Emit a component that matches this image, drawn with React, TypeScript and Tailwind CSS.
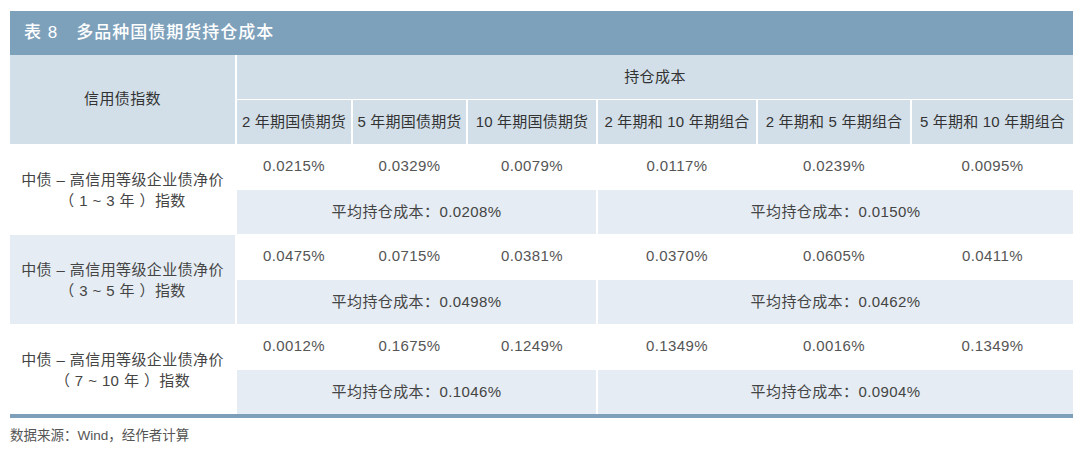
import React from "react";

const font = { fontFamily: '"Liberation Sans","Noto Sans CJK SC",sans-serif' };

const groups = [
  {
    name: "（ 1 ~ 3 年 ）指数",
    values: ["0.0215%", "0.0329%", "0.0079%", "0.0117%", "0.0239%", "0.0095%"],
    avg: ["0.0208%", "0.0150%"],
    light: false,
  },
  {
    name: "（ 3 ~ 5 年 ）指数",
    values: ["0.0475%", "0.0715%", "0.0381%", "0.0370%", "0.0605%", "0.0411%"],
    avg: ["0.0498%", "0.0462%"],
    light: true,
  },
  {
    name: "（ 7 ~ 10 年 ）指数",
    values: ["0.0012%", "0.1675%", "0.1249%", "0.1349%", "0.0016%", "0.1349%"],
    avg: ["0.1046%", "0.0904%"],
    light: false,
  },
];

const heads = [
  "2 年期国债期货",
  "5 年期国债期货",
  "10 年期国债期货",
  "2 年期和 10 年期组合",
  "2 年期和 5 年期组合",
  "5 年期和 10 年期组合",
];

export default function App() {
  return (
    <div className="w-[1080px] h-[450px] bg-white pt-[11px] px-[10px]" style={font}>
      <div className="w-[1063px]">
        <div className="h-[44px] bg-[#7ea1bb] flex items-center pl-[14px] text-white text-[17px] font-medium tracking-[1px]">
          <span>表 8</span>
          <span className="ml-[18px]">多品种国债期货持仓成本</span>
        </div>
        <div className="grid grid-cols-[225px_114px_113px_128px_158px_152px_161px] grid-rows-[44px_44px_44px_44px_44px_44px_44px_44px] gap-x-[2px] gap-y-[1px] bg-white tracking-[0.4px]">
          <div className="row-span-2 bg-[#d2dfe9] flex items-center justify-center text-[15px] text-[#333]">
            信用债指数
          </div>
          <div className="col-span-6 bg-[#d2dfe9] flex items-center justify-center text-[15px] text-[#333]">
            持仓成本
          </div>
          {heads.map((h) => (
            <div
              key={h}
              className="bg-[#d2dfe9] flex items-center justify-center text-[15px] text-[#333] whitespace-nowrap tracking-[0.2px]"
            >
              {h}
            </div>
          ))}
          {groups.map((g, gi) => (
            <React.Fragment key={gi}>
              <div
                className={`row-span-2 flex flex-col items-center justify-center text-[15px] leading-[21px] text-[#444] whitespace-nowrap ${
                  g.light ? "bg-[#e5ecf3]" : "bg-white"
                }`}
              >
                <span>中债 – 高信用等级企业债净价</span>
                <span>{g.name}</span>
              </div>
              {g.values.map((v, i) => (
                <div
                  key={i}
                  className="bg-white flex items-center justify-center pb-[2px] text-[15px] text-[#555]"
                >
                  {v}
                </div>
              ))}
              <div className="col-span-3 bg-[#e5ecf3] flex items-center justify-center text-[15px] text-[#444]">
                平均持仓成本：{g.avg[0]}
              </div>
              <div className="col-span-3 bg-[#e5ecf3] flex items-center justify-center text-[15px] text-[#444]">
                平均持仓成本：{g.avg[1]}
              </div>
            </React.Fragment>
          ))}
        </div>
        <div className="h-[4px] bg-[#7d9fba]" />
        <div className="mt-[8px] text-[13.5px] text-[#555]">数据来源：Wind，经作者计算</div>
      </div>
    </div>
  );
}
